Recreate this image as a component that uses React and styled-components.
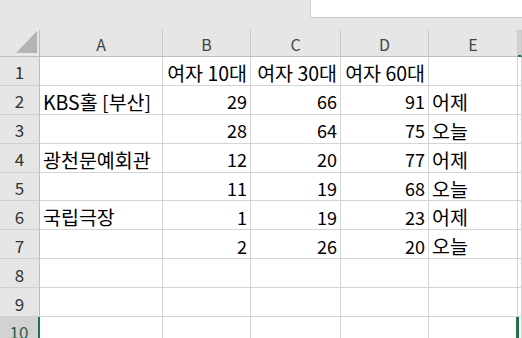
import React from "react";
import styled, { createGlobalStyle, css } from "styled-components";

const Global = createGlobalStyle`
  html, body { margin: 0; padding: 0; background: #e6e6e6; overflow: hidden; }
  body { font-family: "Noto Sans CJK KR", "Noto Sans", sans-serif; }
`;

const Page = styled.div`
  width: 522px;
  height: 338px;
  overflow: hidden;
  background: #e6e6e6;
`;

const TopBar = styled.div`
  height: 30px;
  display: flex;
  justify-content: flex-end;
  align-items: flex-start;
`;

const FormulaBox = styled.div`
  width: 211px;
  height: 17px;
  background: #ffffff;
  border-left: 1px solid #d6d6d6;
  border-bottom: 1px solid #c6c6c6;
`;

const Sheet = styled.div`
  display: grid;
  grid-template-columns: 40px 123px 88px 90px 88px 89px 1fr;
  grid-template-rows: 27px repeat(10, 28.9px);
  background: #ffffff;
`;

const Corner = styled.div`
  position: relative;
  background: #e6e6e6;
  border-right: 1px solid #bdbdbd;
  border-bottom: 1px solid #bdbdbd;
`;

const Triangle = styled.svg`
  position: absolute;
  right: 2px;
  bottom: 3px;
`;

const ColHead = styled.div`
  background: ${(p) => (p.$active ? "#d2d2d2" : "#e6e6e6")};
  border-right: 1px solid #c8c8c8;
  border-bottom: ${(p) => (p.$active ? "2px solid #217346" : "1px solid #bdbdbd")};
  display: flex;
  align-items: center;
  justify-content: center;
  font-size: 16px;
  color: #444;
  padding-top: 1px;
`;

const RowHead = styled.div`
  background: ${(p) => (p.$active ? "#d2d2d2" : "#e6e6e6")};
  border-right: ${(p) => (p.$active ? "2px solid #217346" : "1px solid #bdbdbd")};
  border-bottom: 1px solid #d0d0d0;
  display: flex;
  align-items: center;
  justify-content: center;
  font-size: 17px;
  color: ${(p) => (p.$active ? "#2d5e43" : "#333")};
  padding-top: 2px;
`;

const Cell = styled.div`
  position: relative;
  border-right: 1px solid #d4d4d4;
  border-bottom: 1px solid #d4d4d4;
  display: flex;
  align-items: center;
  justify-content: ${(p) => (p.$num ? "flex-end" : "flex-start")};
  padding: 3px ${(p) => (p.$num ? "3px" : "0")} 0 ${(p) => (p.$num ? "0" : "3px")};
  font-size: ${(p) => (p.$digits ? "18px" : "19.5px")};
  color: #000;
  white-space: nowrap;
  overflow: visible;
  ${(p) =>
    p.$selected &&
    css`
      box-shadow: inset 3px 0 0 #217346;
      margin-left: -2px;
    `}
`;

const cols = ["A", "B", "C", "D", "E"];

const rows = [
  ["", "여자 10대", "여자 30대", "여자 60대", ""],
  ["KBS홀 [부산]", 29, 66, 91, "어제"],
  ["", 28, 64, 75, "오늘"],
  ["광천문예회관", 12, 20, 77, "어제"],
  ["", 11, 19, 68, "오늘"],
  ["국립극장", 1, 19, 23, "어제"],
  ["", 2, 26, 20, "오늘"],
  ["", "", "", "", ""],
  ["", "", "", "", ""],
  ["", "", "", "", ""],
];

export default function App() {
  return (
    <Page>
      <Global />
      <TopBar>
        <FormulaBox />
      </TopBar>
      <Sheet>
        <Corner>
          <Triangle width="21" height="22" viewBox="0 0 21 22">
            <polygon points="21,0 21,22 0,22" fill="#b4b4b4" />
          </Triangle>
        </Corner>
        {cols.map((c) => (
          <ColHead key={c}>{c}</ColHead>
        ))}
        <ColHead $active />
        {rows.map((r, i) => (
          <React.Fragment key={i}>
            <RowHead $active={i === 9}>{i + 1}</RowHead>
            {r.map((v, j) => {
              const isNum = typeof v === "number";
              const right = isNum || (i === 0 && j > 0 && j < 4);
              return (
                <Cell key={j} $num={right} $digits={isNum}>
                  {v}
                </Cell>
              );
            })}
            <Cell $selected={i === 9} />
          </React.Fragment>
        ))}
      </Sheet>
    </Page>
  );
}
